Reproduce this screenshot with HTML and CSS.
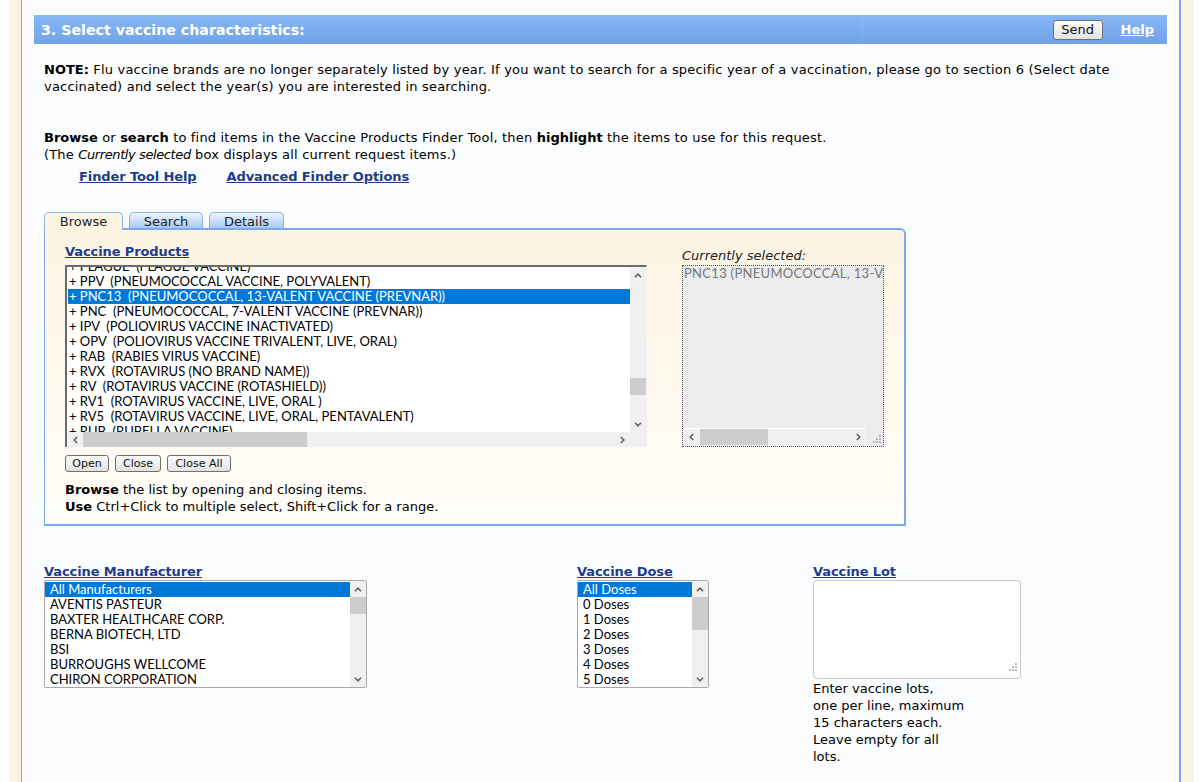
FILE: index.html
```html
<!DOCTYPE html>
<html>
<head>
<meta charset="utf-8">
<title>Select vaccine characteristics</title>
<link rel="stylesheet" href="styles.css">
</head>
<body>
<div class="frame">
  <div class="content">
    <div class="section-head">
      <div class="section-title">3. Select vaccine characteristics:</div>
      <div class="head-actions">
        <button class="btn send-btn">Send</button>
        <a class="help-link" href="#">Help</a>
      </div>
    </div>

    <div class="section-body">
      <p class="note"><b>NOTE:</b> Flu vaccine brands are no longer separately listed by year. If you want to search for a specific year of a vaccination, please go to section 6 (Select date vaccinated) and select the year(s) you are interested in searching.</p>

      <p class="intro"><b>Browse</b> or <b>search</b> to find items in the Vaccine Products Finder Tool, then <b>highlight</b> the items to use for this request.<br>(The <i class="tight">Currently selected</i> box displays all current request items.)</p>

      <div class="finder-links">
        <a href="#">Finder Tool Help</a>
        <a href="#">Advanced Finder Options</a>
      </div>

      <div class="tabs">
        <div class="tab tab-browse active">Browse</div>
        <div class="tab tab-search">Search</div>
        <div class="tab tab-details">Details</div>
      </div>

      <div class="tab-panel">
        <div class="panel-cols">
          <div class="products-col">
            <a class="field-label" href="#">Vaccine Products</a>
            <div class="products-box">
              <div class="products-view">
                <div class="products-opts">
                  <div class="popt">+ PLAGUE&nbsp;&nbsp;(PLAGUE VACCINE)</div>
                  <div class="popt">+ PPV&nbsp;&nbsp;(PNEUMOCOCCAL VACCINE, POLYVALENT)</div>
                  <div class="popt sel">+ PNC13&nbsp;&nbsp;(PNEUMOCOCCAL, 13-VALENT VACCINE (PREVNAR))</div>
                  <div class="popt">+ PNC&nbsp;&nbsp;(PNEUMOCOCCAL, 7-VALENT VACCINE (PREVNAR))</div>
                  <div class="popt">+ IPV&nbsp;&nbsp;(POLIOVIRUS VACCINE INACTIVATED)</div>
                  <div class="popt">+ OPV&nbsp;&nbsp;(POLIOVIRUS VACCINE TRIVALENT, LIVE, ORAL)</div>
                  <div class="popt">+ RAB&nbsp;&nbsp;(RABIES VIRUS VACCINE)</div>
                  <div class="popt">+ RVX&nbsp;&nbsp;(ROTAVIRUS (NO BRAND NAME))</div>
                  <div class="popt">+ RV&nbsp;&nbsp;(ROTAVIRUS VACCINE (ROTASHIELD))</div>
                  <div class="popt">+ RV1&nbsp;&nbsp;(ROTAVIRUS VACCINE, LIVE, ORAL )</div>
                  <div class="popt">+ RV5&nbsp;&nbsp;(ROTAVIRUS VACCINE, LIVE, ORAL, PENTAVALENT)</div>
                  <div class="popt">+ RUB&nbsp;&nbsp;(RUBELLA VACCINE)</div>
                </div>
              </div>
              <div class="vscroll">
                <div class="sb-arrow"><svg width="8" height="5" viewBox="0 0 8 5"><path d="M1 4.2 L4 1.2 L7 4.2" fill="none" stroke="#606060" stroke-width="1.6"/></svg></div>
                <div class="sb-track"><div class="vthumb products-vthumb"></div></div>
                <div class="sb-arrow"><svg width="8" height="5" viewBox="0 0 8 5"><path d="M1 0.8 L4 3.8 L7 0.8" fill="none" stroke="#606060" stroke-width="1.6"/></svg></div>
              </div>
              <div class="hscroll">
                <div class="sb-harrow"><svg width="5" height="8" viewBox="0 0 5 8"><path d="M4.2 1 L1.2 4 L4.2 7" fill="none" stroke="#606060" stroke-width="1.6"/></svg></div>
                <div class="sb-htrack"><div class="hthumb products-hthumb"></div></div>
                <div class="sb-harrow"><svg width="5" height="8" viewBox="0 0 5 8"><path d="M0.8 1 L3.8 4 L0.8 7" fill="none" stroke="#606060" stroke-width="1.6"/></svg></div>
                <div class="sb-corner"></div>
              </div>
            </div>
            <div class="panel-buttons">
              <button class="btn small-btn btn-open">Open</button>
              <button class="btn small-btn btn-close">Close</button>
              <button class="btn small-btn btn-closeall">Close All</button>
            </div>
            <p class="panel-help"><b>Browse</b> the list by opening and closing items.<br><b>Use</b> Ctrl+Click to multiple select, Shift+Click for a range.</p>
          </div>

          <div class="selected-col">
            <div class="sel-label">Currently selected:</div>
            <div class="selbox">
              <div class="selbox-text">PNC13 (PNEUMOCOCCAL, 13-VALENT VACCINE (PREVNAR))</div>
              <div class="selbox-scroll">
                <div class="sb-harrow"><svg width="5" height="8" viewBox="0 0 5 8"><path d="M4.2 1 L1.2 4 L4.2 7" fill="none" stroke="#606060" stroke-width="1.6"/></svg></div>
                <div class="sb-htrack"><div class="hthumb sel-hthumb"></div></div>
                <div class="sb-harrow"><svg width="5" height="8" viewBox="0 0 5 8"><path d="M0.8 1 L3.8 4 L0.8 7" fill="none" stroke="#606060" stroke-width="1.6"/></svg></div>
                <div class="grip-corner"><svg width="8" height="8" viewBox="0 0 8 8"><rect x="6" y="0" width="2" height="2" fill="#b8b8b8"/><rect x="3" y="3" width="2" height="2" fill="#b8b8b8"/><rect x="6" y="3" width="2" height="2" fill="#b8b8b8"/><rect x="0" y="6" width="2" height="2" fill="#b8b8b8"/><rect x="3" y="6" width="2" height="2" fill="#b8b8b8"/><rect x="6" y="6" width="2" height="2" fill="#b8b8b8"/></svg></div>
              </div>
            </div>
          </div>
        </div>
      </div>

      <div class="criteria">
        <div class="crit-col">
          <a class="field-label" href="#">Vaccine Manufacturer</a>
          <div class="listbox manu-list">
            <div class="list-opts">
              <div class="opt sel">All Manufacturers</div>
              <div class="opt">AVENTIS PASTEUR</div>
              <div class="opt">BAXTER HEALTHCARE CORP.</div>
              <div class="opt">BERNA BIOTECH, LTD</div>
              <div class="opt">BSI</div>
              <div class="opt">BURROUGHS WELLCOME</div>
              <div class="opt">CHIRON CORPORATION</div>
            </div>
            <div class="vscroll">
              <div class="sb-arrow"><svg width="8" height="5" viewBox="0 0 8 5"><path d="M1 4.2 L4 1.2 L7 4.2" fill="none" stroke="#606060" stroke-width="1.6"/></svg></div>
              <div class="sb-track"><div class="vthumb manu-vthumb"></div></div>
              <div class="sb-arrow"><svg width="8" height="5" viewBox="0 0 8 5"><path d="M1 0.8 L4 3.8 L7 0.8" fill="none" stroke="#606060" stroke-width="1.6"/></svg></div>
            </div>
          </div>
        </div>

        <div class="crit-col">
          <a class="field-label" href="#">Vaccine Dose</a>
          <div class="listbox dose-list">
            <div class="list-opts">
              <div class="opt sel">All Doses</div>
              <div class="opt">0 Doses</div>
              <div class="opt">1 Doses</div>
              <div class="opt">2 Doses</div>
              <div class="opt">3 Doses</div>
              <div class="opt">4 Doses</div>
              <div class="opt">5 Doses</div>
            </div>
            <div class="vscroll">
              <div class="sb-arrow"><svg width="8" height="5" viewBox="0 0 8 5"><path d="M1 4.2 L4 1.2 L7 4.2" fill="none" stroke="#606060" stroke-width="1.6"/></svg></div>
              <div class="sb-track"><div class="vthumb dose-vthumb"></div></div>
              <div class="sb-arrow"><svg width="8" height="5" viewBox="0 0 8 5"><path d="M1 0.8 L4 3.8 L7 0.8" fill="none" stroke="#606060" stroke-width="1.6"/></svg></div>
            </div>
          </div>
        </div>

        <div class="crit-col">
          <a class="field-label" href="#">Vaccine Lot</a>
          <div class="lot-box">
            <div class="lot-grip"><svg width="8" height="8" viewBox="0 0 8 8"><rect x="6" y="0" width="2" height="2" fill="#b8b8b8"/><rect x="3" y="3" width="2" height="2" fill="#b8b8b8"/><rect x="6" y="3" width="2" height="2" fill="#b8b8b8"/><rect x="0" y="6" width="2" height="2" fill="#b8b8b8"/><rect x="3" y="6" width="2" height="2" fill="#b8b8b8"/><rect x="6" y="6" width="2" height="2" fill="#b8b8b8"/></svg></div>
          </div>
          <p class="lot-help">Enter vaccine lots,<br>one per line, maximum<br>15 characters each.<br>Leave empty for all<br>lots.</p>
        </div>
      </div>
    </div>
  </div>
</div>
</body>
</html>
```

FILE: styles.css
```css
html, body {
  margin: 0;
  padding: 0;
}

body {
  background: #ffffff;
  font-family: "DejaVu Sans", Verdana, sans-serif;
  font-size: 13px;
  line-height: 17px;
  color: #000;
  overflow: hidden;
}

b {
  letter-spacing: 0;
}

.frame {
  margin-left: 9px;
  width: 1185px;
  height: 782px;
  box-sizing: border-box;
  padding: 0 13px 0 12px;
  background: #fdf3e3;
}

.content {
  height: 100%;
  box-sizing: border-box;
  background: #fbfcfd;
  border-left: 1px solid #7ea7dd;
  border-right: 2px solid #78a8ee;
  padding: 15px 12px 0 12px;
}

/* ---------- header bar ---------- */
.section-head {
  height: 29px;
  display: flex;
  background: linear-gradient(#88b7f7, #70a3e9);
}

.section-title {
  flex: 1;
  display: flex;
  align-items: center;
  padding: 2px 0 0 7px;
  box-sizing: border-box;
  color: #fff;
  font-weight: bold;
  font-size: 14.2px;
}

.head-actions {
  width: 305px;
  display: flex;
  align-items: center;
  justify-content: flex-end;
  padding-right: 13px;
  gap: 18px;
  box-sizing: border-box;
  border-left: 1px solid rgba(255, 255, 255, 0.08);
}

.btn {
  font-family: "DejaVu Sans", Verdana, sans-serif;
  color: #111;
  background: linear-gradient(#fbfbfb, #e3e3e3);
  border: 1px solid #707070;
  border-radius: 3px;
  margin: 0;
  cursor: default;
}

.send-btn {
  width: 50px;
  height: 20px;
  padding: 0;
  font-size: 13px;
  line-height: 17px;
}

.help-link {
  color: #fff;
  font-weight: bold;
  text-decoration: underline;
}

/* ---------- body ---------- */
.section-body {
  padding-left: 10px;
}

.note {
  margin: 17px 0 0 0;
  letter-spacing: 0.2px;
}

.intro {
  margin: 34px 0 0 0;
  letter-spacing: 0.18px;
}

.tight {
  letter-spacing: -0.4px;
}

.finder-links {
  margin-top: 5px;
  padding-left: 35px;
  display: flex;
  gap: 30px;
}

.finder-links a,
.field-label {
  color: #1d3c8f;
  font-weight: bold;
  text-decoration: underline;
  letter-spacing: -0.1px;
}

/* ---------- tabs ---------- */
.tabs {
  margin-top: 27px;
  display: flex;
  gap: 6px;
  height: 16px;
  position: relative;
  z-index: 2;
}

.tab {
  box-sizing: border-box;
  height: 16px;
  line-height: 17px;
  text-align: center;
  color: #222;
  border: 1px solid #8bb4ea;
  border-bottom: none;
  border-radius: 5px 5px 0 0;
  background: linear-gradient(#eef5fe, #a8c8f3);
}

.tab.active {
  background: #fdf4e2;
  height: 18px;
}

.tab-browse { width: 79px; }
.tab-search { width: 74px; }
.tab-details { width: 75px; }

.tab-panel {
  width: 862px;
  box-sizing: border-box;
  border: 2px solid #7aaaee;
  border-left-width: 1px;
  border-radius: 0 6px 0 0;
  background: linear-gradient(#fdf4e2, #fffdf8);
  padding: 13px 0 9px 20px;
}

.panel-cols {
  display: flex;
  gap: 35px;
}

.products-col {
  width: 582px;
}

.field-label {
  display: block;
  width: max-content;
  margin-bottom: 5px;
}

/* products list */
.products-box {
  height: 182px;
  box-sizing: border-box;
  border-style: solid;
  border-width: 2px 1px 0 2px;
  border-color: #6b6b6b #f0f0f0 #f0f0f0 #6b6b6b;
  display: grid;
  grid-template-columns: 1fr 16px;
  grid-template-rows: 1fr 15px;
  background: #fff;
}

.products-view {
  overflow: hidden;
}

.products-opts {
  margin-top: -8px;
  padding-left: 1px;
}

.popt {
  height: 15px;
  line-height: 15px;
  white-space: pre;
  padding-left: 1px;
  font-family: "Lato", sans-serif;
  font-size: 13px;
  color: #000;
}

.popt.sel,
.opt.sel {
  background: #0078d7;
  color: #fff;
}

.vscroll {
  background: #f0f0f0;
  display: flex;
  flex-direction: column;
}

.sb-arrow {
  height: 16px;
  display: flex;
  align-items: center;
  justify-content: center;
}

.sb-track {
  flex: 1;
}

.vthumb {
  background: #cdcdcd;
}

.products-vthumb {
  margin-top: 95px;
  height: 17px;
}

.hscroll {
  grid-column: 1 / 3;
  background: #f0f0f0;
  display: flex;
}

.sb-harrow {
  width: 16px;
  display: flex;
  align-items: center;
  justify-content: center;
}

.sb-htrack {
  flex: 1;
}

.hthumb {
  height: 100%;
  background: #cdcdcd;
}

.products-hthumb {
  width: 224px;
}

.sb-corner {
  width: 16px;
}

.panel-buttons {
  margin-top: 8px;
  display: flex;
  gap: 6px;
}

.small-btn {
  height: 17px;
  padding: 0;
  font-size: 11px;
  line-height: 14px;
  text-align: center;
}

.btn-open { width: 44px; }
.btn-close { width: 46px; }
.btn-closeall { width: 64px; }

.panel-help {
  margin: 9px 0 0 0;
}

/* currently selected */
.selected-col {
  width: 202px;
}

.sel-label {
  padding-top: 4px;
  height: 18px;
  line-height: 18px;
  font-style: italic;
  color: #222;
}

.selbox {
  height: 182px;
  box-sizing: border-box;
  border: 1px dotted #555;
  background: #ececec;
  display: flex;
  flex-direction: column;
  overflow: hidden;
}

.selbox-text {
  flex: 1;
  white-space: nowrap;
  overflow: hidden;
  font-family: "Lato", sans-serif;
  font-size: 13px;
  line-height: 15px;
  letter-spacing: 0.3px;
  color: #767676;
  padding-left: 1px;
}

.selbox-scroll {
  height: 16px;
  display: flex;
  border-top: 1px solid #fff;
  margin-right: 17px;
  background: #f0f0f0;
  position: relative;
  margin-bottom: 1px;
}

.sel-hthumb {
  width: 68px;
  margin-left: 1px;
}

.grip-corner {
  position: absolute;
  right: -17px;
  top: -1px;
  width: 17px;
  height: 17px;
  background: #ececec;
  display: flex;
  align-items: flex-end;
  justify-content: flex-end;
  padding: 0 2px 2px 0;
  box-sizing: border-box;
}

/* ---------- criteria ---------- */
.criteria {
  margin-top: 37px;
  display: grid;
  grid-template-columns: 533px 236px auto;
}

.crit-col .field-label {
  margin-bottom: 0;
}

.listbox {
  height: 108px;
  box-sizing: border-box;
  border: 1px solid #a9a9a9;
  border-radius: 2px;
  background: #fff;
  display: flex;
}

.manu-list { width: 323px; }
.dose-list { width: 132px; }

.list-opts {
  flex: 1;
  padding-top: 1px;
}

.opt {
  height: 15px;
  line-height: 15px;
  padding-left: 5px;
  font-family: "Lato", sans-serif;
  font-size: 13px;
  color: #000;
  white-space: nowrap;
}

.listbox .vscroll {
  width: 16px;
}

.manu-vthumb {
  height: 17px;
}

.dose-vthumb {
  height: 33px;
}

.lot-box {
  width: 208px;
  height: 99px;
  box-sizing: border-box;
  border: 1px solid #c8c8c8;
  border-radius: 4px;
  background: #fff;
  display: flex;
  align-items: flex-end;
  justify-content: flex-end;
  padding: 0 3px 3px 0;
}

.lot-help {
  margin: 1px 0 0 0;
  white-space: nowrap;
}
```
